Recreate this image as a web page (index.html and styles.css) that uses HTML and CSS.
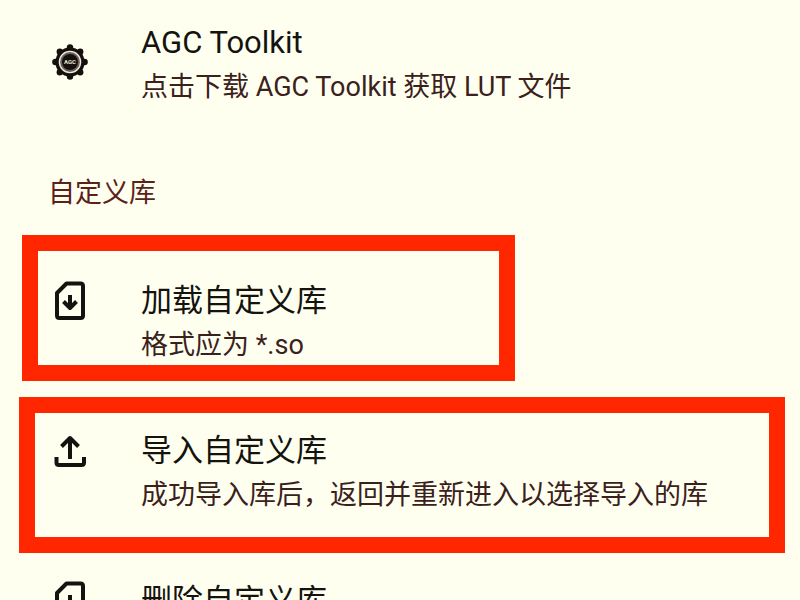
FILE: index.html
```html
<!DOCTYPE html>
<html lang="zh-CN">
<head>
    <meta charset="UTF-8">
    <meta name="viewport" content="width=device-width, initial-scale=1.0">
    <title>自定义库</title>
    <link rel="stylesheet" href="styles.css">
</head>
<body>
    <main class="settings">
        <!-- Toolkit -->
        <div class="row row-toolkit">
            <svg class="icon" viewBox="0 0 36 48" aria-hidden="true">
                <g fill="#15100d">
                    <circle cx="18" cy="23" r="14.6"/>
                    <circle cx="18" cy="8.4" r="3.2"/>
                    <circle cx="28.2" cy="12.8" r="3.2"/>
                    <circle cx="32.6" cy="23" r="3.2"/>
                    <circle cx="28.2" cy="33.2" r="3.2"/>
                    <circle cx="18" cy="37.6" r="3.2"/>
                    <circle cx="7.8" cy="33.2" r="3.2"/>
                    <circle cx="3.4" cy="23" r="3.2"/>
                    <circle cx="7.8" cy="12.8" r="3.2"/>
                </g>
                <circle cx="18" cy="23" r="10.6" fill="#6b625b" stroke="#efeadd" stroke-width="1.4"/>
                <circle cx="18" cy="23" r="8" fill="#15100d"/>
                <text class="icon-label" x="18" y="25">AGC</text>
            </svg>
            <div class="text">
                <div class="title">AGC Toolkit</div>
                <div class="summary">点击下载 AGC Toolkit 获取 LUT 文件</div>
            </div>
        </div>

        <h2 class="category">自定义库</h2>

        <!-- Custom library -->
        <div class="row marked marked-load">
            <svg class="icon line" viewBox="0 0 36 48" aria-hidden="true">
                <path d="M14.5 6.5H28.5Q31 6.5 31 9V38.5Q31 41 28.5 41H7.5Q5 41 5 38.5V16Z"/>
                <path d="M18 18V31M11.5 24.5L18 31L24.5 24.5"/>
            </svg>
            <div class="text">
                <div class="title">加载自定义库</div>
                <div class="summary">格式应为 *.so</div>
            </div>
        </div>

        <div class="row marked marked-import">
            <svg class="icon line" viewBox="0 0 36 48" aria-hidden="true">
                <path d="M18 32V11M9.5 19.5L18 11L26.5 19.5"/>
                <path d="M4.5 30V35.5Q4.5 38 7 38H29.5Q32 38 32 35.5V30"/>
            </svg>
            <div class="text">
                <div class="title">导入自定义库</div>
                <div class="summary">成功导入库后，返回并重新进入以选择导入的库</div>
            </div>
        </div>

        <div class="row row-delete">
            <svg class="icon line" viewBox="0 0 36 48" aria-hidden="true">
                <path d="M14.5 6.5H28.5Q31 6.5 31 9V38.5Q31 41 28.5 41H7.5Q5 41 5 38.5V16Z"/>
                <path d="M18 18V31M11.5 24.5L18 31L24.5 24.5"/>
            </svg>
            <div class="text">
                <div class="title">删除自定义库</div>
            </div>
        </div>
    </main>
</body>
</html>
```

FILE: styles.css
```css
/* Global Styling */
body {
    margin: 0;
    height: 100vh;
    overflow: hidden;
    font-family: Roboto, "Noto Sans CJK SC", sans-serif;
    background: #fffff0;
    color: #15130f;
}

.settings {
    display: flex;
    flex-direction: column;
    padding-top: 19px;
}

/* Rows */
.row {
    display: flex;
    align-items: flex-start;
    gap: 53px;
    padding-left: 52px;
}

.row-toolkit {
    align-items: center;
}

.row-delete {
    padding-top: 24px;
}

.title {
    font-size: 31px;
    line-height: 48px;
}

.summary {
    font-size: 27px;
    line-height: 40px;
    color: #3b211b;
}

.category {
    margin: 66px 48px 22px;
    font-size: 27px;
    font-weight: 400;
    line-height: 40px;
    color: #5a2219;
}

/* Red frames */
.marked {
    border: 16px solid #ff2600;
}

.marked-load {
    margin: 0 285px 16px 22px;
    padding: 26px 0 0 14px;
}

.marked-import {
    margin: 0 15px 0 19px;
    padding: 14px 0 22px 17px;
}

/* Icons */
.icon {
    flex: none;
    width: 36px;
    height: 48px;
}

.line {
    fill: none;
    stroke: #15130f;
    stroke-width: 4;
    stroke-linejoin: round;
}

.icon-label {
    font-size: 6px;
    font-weight: 700;
    text-anchor: middle;
    fill: #e9e4d8;
}
```
